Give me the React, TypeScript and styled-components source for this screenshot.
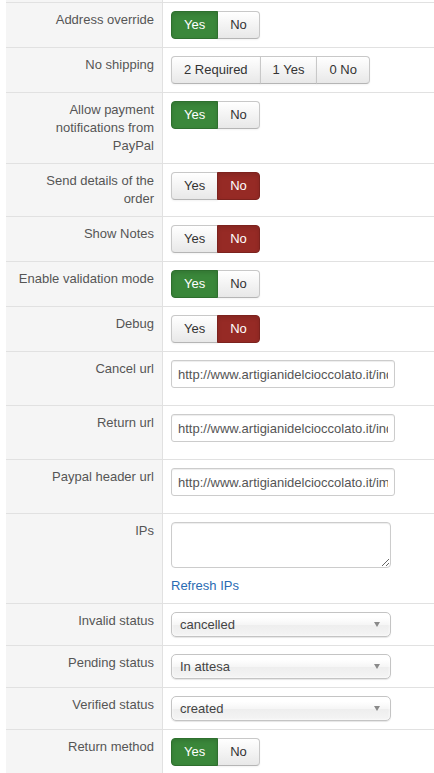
import React from 'react';
import styled, { createGlobalStyle, css } from 'styled-components';

const GlobalStyle = createGlobalStyle`
  html, body { margin: 0; padding: 0; background: #fff; }
  body {
    font-family: "Liberation Sans", Arial, Helvetica, sans-serif;
    font-size: 13px;
    line-height: 18px;
    color: #333;
  }
  * { box-sizing: border-box; }
`;

const Table = styled.div`
  margin-left: 6px;
  display: flex;
  flex-direction: column;
  height: 773px;
  overflow: hidden;
`;

const Row = styled.div<{ $stub?: boolean }>`
  display: grid;
  flex-shrink: 0;
  grid-template-columns: 157px 1fr;
  border-top: ${(p) => (p.$stub ? 'none' : '1px solid #e1e1e1')};
  ${(p) =>
    p.$stub &&
    css`
      height: 2px;
      overflow: hidden;
    `}
`;

const LabelCell = styled.div`
  background: #f5f5f5;
  border-right: 1px solid #e1e1e1;
  padding: 8px 8px 8px 10px;
  text-align: right;
  color: #555;
`;

const ValueCell = styled.div`
  padding: 8px;
  display: flex;
  flex-direction: column;
  align-items: flex-start;
`;

const BtnGroup = styled.div`
  display: inline-flex;
`;

type Variant = 'default' | 'success' | 'danger';

const Btn = styled.span<{ $variant: Variant }>`
  display: inline-block;
  height: 28px;
  padding: 4px 12px;
  line-height: 18px;
  font-size: 13px;
  border: 1px solid #c8c8c8;
  border-bottom-color: #b5b5b5;
  margin-left: -1px;
  color: #333;
  background: linear-gradient(to bottom, #ffffff, #e8e8e8);
  box-shadow: inset 0 1px 0 rgba(255, 255, 255, 0.2), 0 1px 2px rgba(0, 0, 0, 0.05);
  &:first-child {
    margin-left: 0;
    border-radius: 4px 0 0 4px;
  }
  &:last-child {
    border-radius: 0 4px 4px 0;
  }
  ${(p) =>
    p.$variant === 'success' &&
    css`
      background: #3a873a;
      border-color: #2e6f2e;
      color: #fff;
      position: relative;
      box-shadow: inset 0 2px 4px rgba(0, 0, 0, 0.12);
    `}
  ${(p) =>
    p.$variant === 'danger' &&
    css`
      background: #962a25;
      border-color: #7c221e;
      color: #fff;
      position: relative;
      box-shadow: inset 0 2px 4px rgba(0, 0, 0, 0.12);
    `}
`;

const TextInput = styled.input`
  width: 224px;
  height: 28px;
  padding: 4px 6px;
  margin: 0 0 9px 0;
  font-family: "Liberation Sans", Arial, Helvetica, sans-serif;
  font-size: 13px;
  line-height: 18px;
  color: #555;
  background: #fff;
  border: 1px solid #ccc;
  border-radius: 3px;
  box-shadow: inset 0 1px 1px rgba(0, 0, 0, 0.075);
  outline: none;
`;

const TextArea = styled.textarea`
  width: 220px;
  height: 46px;
  padding: 4px 6px;
  margin: 0 0 9px 0;
  font-family: "Liberation Sans", Arial, Helvetica, sans-serif;
  font-size: 13px;
  border: 1px solid #ccc;
  border-radius: 4px;
  box-shadow: inset 0 1px 1px rgba(0, 0, 0, 0.075);
  outline: none;
  display: block;
`;

const Link = styled.a`
  color: #2a6bb3;
  text-decoration: none;
  font-size: 13px;
  line-height: 18px;
`;

const SelectBox = styled.div`
  width: 220px;
  height: 25px;
  padding: 1px 10px 0 8px;
  display: flex;
  align-items: center;
  justify-content: space-between;
  border: 1px solid #c4c4c4;
  border-radius: 5px;
  background: linear-gradient(to bottom, #ffffff 20%, #f6f6f6 50%, #eeeeee 52%, #f4f4f4 100%);
  box-shadow: inset 0 0 3px #fff, 0 1px 1px rgba(0, 0, 0, 0.1);
  color: #444;
  font-size: 13px;
  line-height: 24px;
`;

const Caret = styled.span`
  width: 0;
  height: 0;
  border-left: 3.5px solid transparent;
  border-right: 3.5px solid transparent;
  border-top: 5px solid #8a8a8a;
  margin-top: -1px;
`;

type Field =
  | { kind: 'toggle'; label: string; yes: boolean }
  | { kind: 'multi'; label: string; options: string[] }
  | { kind: 'url'; label: string; value: string }
  | { kind: 'ips'; label: string }
  | { kind: 'select'; label: string; value: string };

const fields: Field[] = [
  { kind: 'toggle', label: 'Address override', yes: true },
  { kind: 'multi', label: 'No shipping', options: ['2 Required', '1 Yes', '0 No'] },
  { kind: 'toggle', label: 'Allow payment notifications from PayPal', yes: true },
  { kind: 'toggle', label: 'Send details of the order', yes: false },
  { kind: 'toggle', label: 'Show Notes', yes: false },
  { kind: 'toggle', label: 'Enable validation mode', yes: true },
  { kind: 'toggle', label: 'Debug', yes: false },
  {
    kind: 'url',
    label: 'Cancel url',
    value: 'http://www.artigianidelcioccolato.it/index.php?option=com_hikashop&ctrl=order&task=cancel_order',
  },
  {
    kind: 'url',
    label: 'Return url',
    value: 'http://www.artigianidelcioccolato.it/index.php?option=com_hikashop&ctrl=checkout&task=after_end',
  },
  {
    kind: 'url',
    label: 'Paypal header url',
    value: 'http://www.artigianidelcioccolato.it/images/logo.png',
  },
  { kind: 'ips', label: 'IPs' },
  { kind: 'select', label: 'Invalid status', value: 'cancelled' },
  { kind: 'select', label: 'Pending status', value: 'In attesa' },
  { kind: 'select', label: 'Verified status', value: 'created' },
  { kind: 'toggle', label: 'Return method', yes: true },
];

function renderValue(f: Field) {
  switch (f.kind) {
    case 'toggle':
      return (
        <BtnGroup>
          <Btn $variant={f.yes ? 'success' : 'default'}>Yes</Btn>
          <Btn $variant={f.yes ? 'default' : 'danger'}>No</Btn>
        </BtnGroup>
      );
    case 'multi':
      return (
        <BtnGroup>
          {f.options.map((o) => (
            <Btn key={o} $variant="default">
              {o}
            </Btn>
          ))}
        </BtnGroup>
      );
    case 'url':
      return <TextInput type="text" readOnly value={f.value} />;
    case 'ips':
      return (
        <>
          <TextArea readOnly defaultValue="" />
          <Link href="#">Refresh IPs</Link>
        </>
      );
    case 'select':
      return (
        <SelectBox>
          <span>{f.value}</span>
          <Caret />
        </SelectBox>
      );
  }
}

export default function App() {
  return (
    <>
      <GlobalStyle />
      <Table>
        <Row $stub>
          <LabelCell />
          <ValueCell />
        </Row>
        {fields.map((f) => (
          <Row key={f.label}>
            <LabelCell>{f.label}</LabelCell>
            <ValueCell>{renderValue(f)}</ValueCell>
          </Row>
        ))}
      </Table>
    </>
  );
}
